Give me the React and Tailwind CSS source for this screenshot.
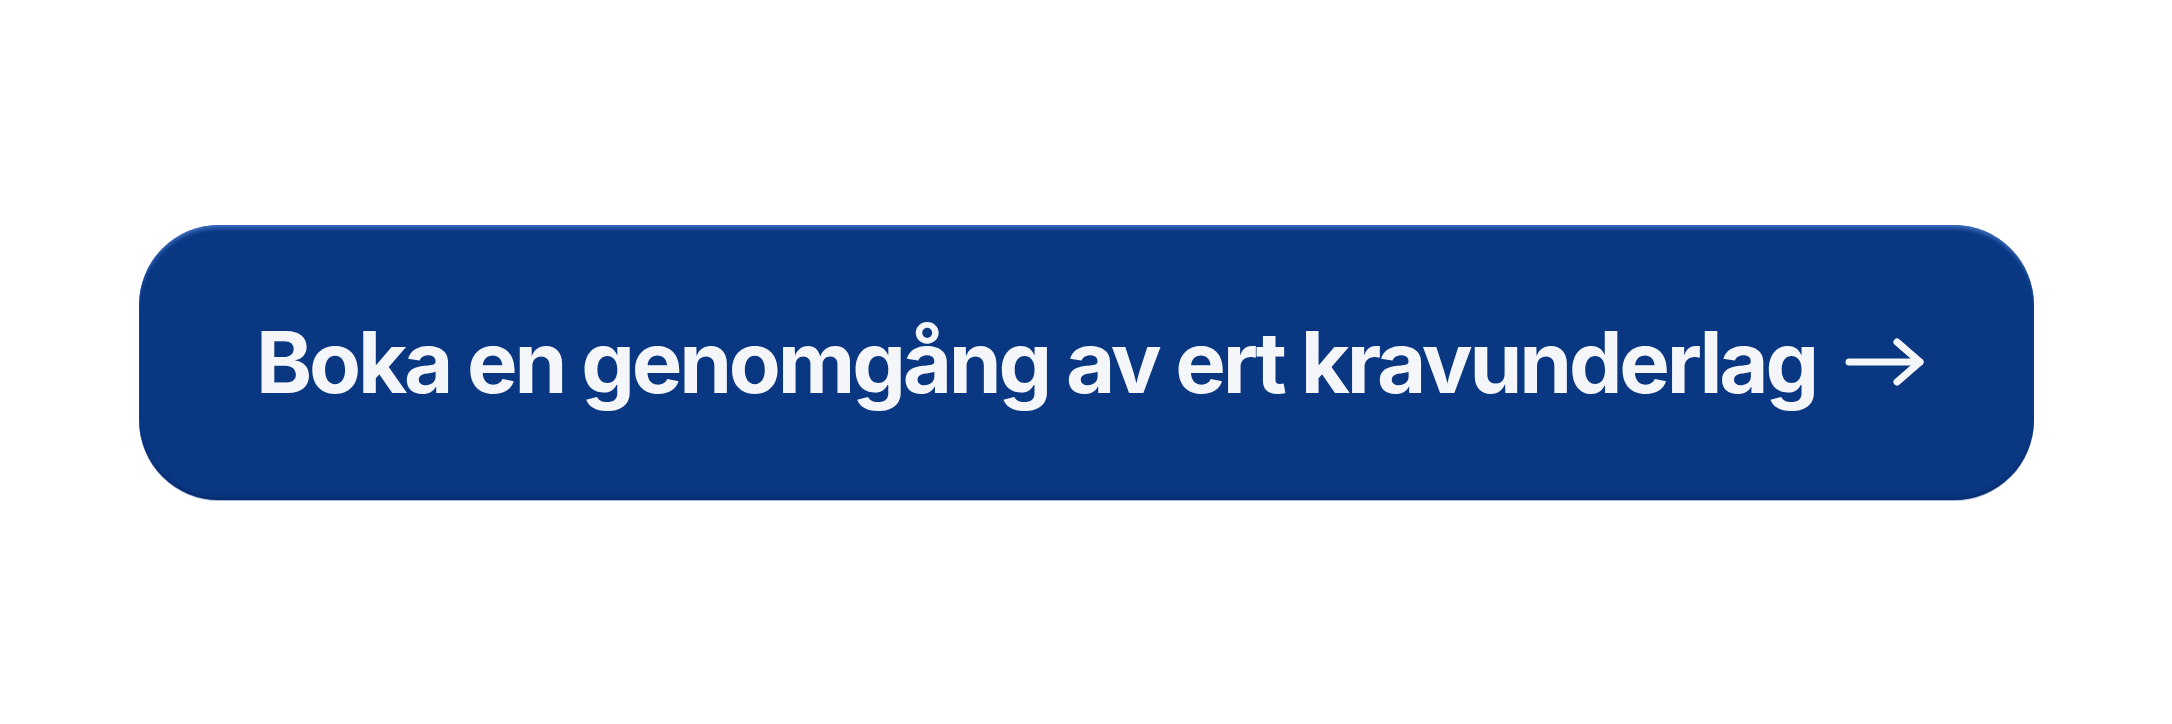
export default function App() {
  return (
    <div className="flex h-[724px] w-[2172px] items-center justify-center bg-white">
      <button
        type="button"
        className="flex h-[275px] w-[1895px] items-center justify-center gap-[29px] rounded-[80px] bg-[#0a3782] pl-[9px] text-[#f4f6fa] shadow-[inset_0_5px_4px_-2px_rgba(70,120,205,0.85),inset_0_-5px_5px_-3px_rgba(0,22,70,0.45),0_1px_0_rgba(120,145,200,0.6)]"
      >
        <span
          className="whitespace-nowrap text-[85px] font-bold leading-none tracking-[-3.2px]"
          style={{ fontFamily: "Inter, 'Noto Sans', sans-serif" }}
        >
          Boka en genomgång av ert kravunderlag
        </span>
        <svg
          width="80"
          height="50"
          viewBox="0 0 80 50"
          fill="none"
          stroke="currentColor"
          strokeWidth="7"
          strokeLinecap="round"
          strokeLinejoin="round"
        >
          <path d="M4 25H75" />
          <path d="M52 5L75 25L52 45" />
        </svg>
      </button>
    </div>
  );
}
